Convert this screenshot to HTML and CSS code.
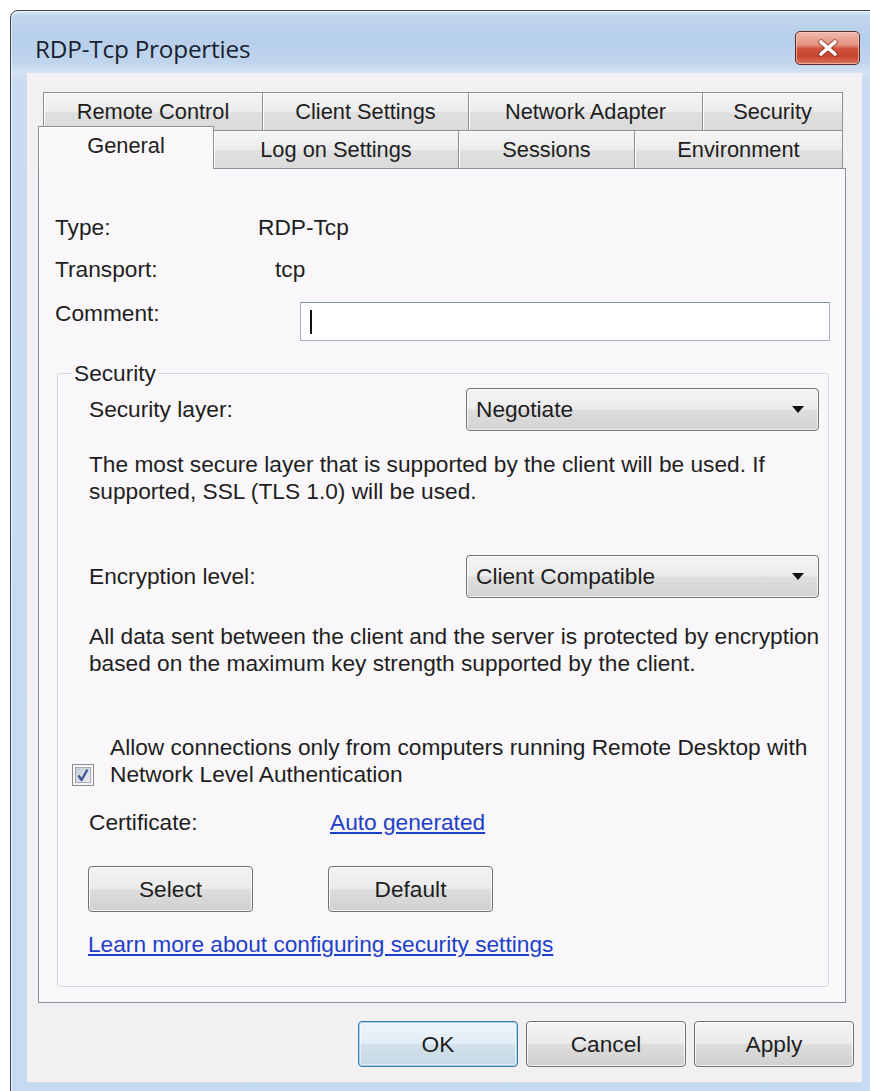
FILE: index.html
```html
<!DOCTYPE html>
<html lang="en">
<head>
<meta charset="utf-8">
<title>RDP-Tcp Properties</title>
<link rel="stylesheet" href="styles.css">
</head>
<body>
<div class="window">
  <div class="titlebar">
    <span class="title">RDP-Tcp Properties</span>
    <button class="close" type="button" aria-label="Close">
      <svg width="24" height="18" viewBox="0 0 24 18">
        <path d="M5 3 L19 15 M19 3 L5 15" stroke="#7a3328" stroke-width="6" stroke-linecap="round" fill="none" opacity="0.55"/>
        <path d="M5 3 L19 15 M19 3 L5 15" stroke="#ffffff" stroke-width="3.6" stroke-linecap="round" fill="none"/>
      </svg>
    </button>
  </div>

  <div class="client">
    <div class="tabs">
      <div class="tab-row tab-row-back">
        <div class="tab tab-remote">Remote Control</div>
        <div class="tab tab-clientset">Client Settings</div>
        <div class="tab tab-network">Network Adapter</div>
        <div class="tab tab-security">Security</div>
      </div>
      <div class="tab-row tab-row-front">
        <div class="tab tab-general is-active">General</div>
        <div class="tab tab-logon">Log on Settings</div>
        <div class="tab tab-sessions">Sessions</div>
        <div class="tab tab-environment">Environment</div>
      </div>
    </div>

    <div class="page">
      <div class="info-row">
        <span class="info-label label-type">Type:</span>
        <span class="info-value">RDP-Tcp</span>
      </div>
      <div class="info-row row-transport">
        <span class="info-label label-transport">Transport:</span>
        <span class="info-value">tcp</span>
      </div>
      <div class="info-row row-comment">
        <span class="info-label label-comment">Comment:</span>
        <div class="textbox"><span class="caret"></span></div>
      </div>

      <fieldset class="group">
        <legend class="group-title">Security</legend>
        <div class="group-body">
          <div class="field-row row-layer">
            <span>Security layer:</span>
            <div class="combo"><span>Negotiate</span><span class="combo-arrow"></span></div>
          </div>
          <p class="note note-layer">The most secure layer that is supported by the client will be used. If<br>supported, SSL (TLS 1.0) will be used.</p>

          <div class="field-row row-encryption">
            <span>Encryption level:</span>
            <div class="combo"><span>Client Compatible</span><span class="combo-arrow"></span></div>
          </div>
          <p class="note note-encryption">All data sent between the client and the server is protected by encryption<br>based on the maximum key strength supported by the client.</p>
        </div>

        <div class="check-row">
          <svg class="checkbox" width="22" height="22" viewBox="0 0 22 22">
            <defs>
              <linearGradient id="cbFill" x1="0" y1="0" x2="1" y2="1">
                <stop offset="0" stop-color="#c3cad4"/>
                <stop offset="1" stop-color="#eef0f3"/>
              </linearGradient>
            </defs>
            <rect x="0.5" y="0.5" width="21" height="21" fill="#f6f6f6" stroke="#8a8c8f"/>
            <rect x="3.5" y="3.5" width="15" height="15" fill="url(#cbFill)" stroke="#a4abb5"/>
            <path d="M6.5 11.5 L9.6 16 L15.5 5.5" fill="none" stroke="#40589a" stroke-width="2.4" stroke-linejoin="round"/>
          </svg>
          <span class="check-label">Allow connections only from computers running Remote Desktop with<br>Network Level Authentication</span>
        </div>

        <div class="group-body">
          <div class="cert-row">
            <span class="cert-label">Certificate:</span>
            <a class="link" href="#">Auto generated</a>
          </div>
          <div class="cert-buttons">
            <button class="btn btn-select" type="button">Select</button>
            <button class="btn btn-default" type="button">Default</button>
          </div>
          <a class="link learn-more" href="#">Learn more about configuring security settings</a>
        </div>
      </fieldset>
    </div>

    <div class="dialog-buttons">
      <button class="btn btn-dialog btn-ok" type="button">OK</button>
      <button class="btn btn-dialog" type="button">Cancel</button>
      <button class="btn btn-dialog" type="button">Apply</button>
    </div>
  </div>
</div>
</body>
</html>
```

FILE: styles.css
```css
html, body {
  margin: 0;
  padding: 0;
  background: #ffffff;
  overflow: hidden;
}

body {
  font-family: "Liberation Sans", Arial, sans-serif;
  font-size: 22.7px;
  line-height: 27px;
  color: #1e1e1e;
}

/* ---------- window frame ---------- */
.window {
  margin: 10px 0 0 10px;
  width: 880px;
  height: 1100px;
  padding-left: 16px;
  border: 1px solid #3b4655;
  border-radius: 8px 8px 0 0;
  background: linear-gradient(180deg,
    #dce8f5 0px, #c1d6ee 5px, #b7cfea 28px, #c0d5ed 52px,
    #d4e3f3 62px, #c8dbf0 72px, #c6daf0 100%);
  box-shadow: inset 1px 1px 0 rgba(255, 255, 255, 0.6);
}

.titlebar {
  display: flex;
  align-items: flex-start;
  width: 835px;
  height: 62px;
}

.title {
  margin: 24px 0 0 8px;
  font-family: "Open Sans", "Noto Sans", sans-serif;
  font-size: 24.3px;
  line-height: 28px;
  color: #18222f;
  letter-spacing: -0.2px;
}

.close {
  margin: 20px 2px 0 auto;
  width: 65px;
  height: 34px;
  padding: 0;
  display: flex;
  align-items: center;
  justify-content: center;
  border: 1px solid #5a2a28;
  border-radius: 5px;
  background: linear-gradient(180deg,
    #f0b9ab 0%, #e49482 40%, #d0533c 52%, #c8442e 75%, #d8755f 100%);
  box-shadow: inset 0 0 0 1px rgba(255, 220, 210, 0.55);
}

/* ---------- client area ---------- */
.client {
  width: 835px;
  box-sizing: border-box;
  height: 1009px;
  padding: 19px 16px 0 11px;
  background: #f3f0f3;
}

.tabs {
  display: flex;
  flex-direction: column;
  font-size: 21.8px;
}

.tab-row {
  display: flex;
  height: 38px;
  align-items: flex-start;
}

.tab-row-back {
  margin-left: 5px;
}

.tab {
  box-sizing: border-box;
  height: 38px;
  margin-right: -1px;
  display: flex;
  align-items: center;
  justify-content: center;
  border: 1px solid #8c8f94;
  border-bottom: 0;
  background: linear-gradient(180deg, #f5f5f5 0%, #ececec 50%, #e0e0e0 51%, #dadada 100%);
  box-shadow: inset 1px 1px 0 #fdfdfd;
  white-space: nowrap;
}

.tab-remote { width: 220px; }
.tab-clientset { width: 207px; }
.tab-network { width: 235px; }
.tab-security { width: 141px; }

.tab-general { width: 176px; }
.tab-logon { width: 246px; }
.tab-sessions { width: 177px; }
.tab-environment { width: 209px; }

.tab.is-active {
  position: relative;
  z-index: 1;
  height: 43px;
  margin-top: -4px;
  padding-bottom: 6px;
  background: #f9f7f9;
  box-shadow: inset 1px 1px 0 #ffffff;
}

/* ---------- tab page ---------- */
.page {
  border: 1px solid #8c8f94;
  background: #f9f7f9;
  padding: 45px 16px 15px 16px;
}

.info-row {
  display: flex;
  align-items: flex-start;
}

.row-transport { margin-top: 15px; }
.row-comment { margin-top: 17px; }

.label-type { width: 203px; }
.label-transport { width: 220px; }
.label-comment { width: 245px; flex: none; }

.textbox {
  flex: 1;
  margin: 2px -1px 0 0;
  height: 39px;
  box-sizing: border-box;
  border: 1px solid #a6b2bf;
  border-top-color: #7f8fa0;
  background: #ffffff;
  display: flex;
  align-items: center;
  padding-left: 9px;
}

.caret {
  width: 1.5px;
  height: 24px;
  background: #111;
}

/* ---------- security group ---------- */
.group {
  margin: 19px 0 0 2px;
  padding: 0 9px 28px 14px;
  border: 1px solid #d2d8de;
  border-radius: 3px;
  box-shadow: inset 1px 1px 0 #ffffff, 1px 1px 0 #ffffff;
  min-inline-size: 0;
}

.group-title {
  padding: 0 2px;
  line-height: 27px;
}

.group-body {
  padding-left: 17px;
}

.field-row {
  display: flex;
  align-items: center;
  justify-content: space-between;
}

.row-layer { margin-top: 1px; }
.row-encryption { margin-top: 50px; }

.combo {
  box-sizing: border-box;
  width: 353px;
  height: 43px;
  display: flex;
  align-items: center;
  justify-content: space-between;
  padding: 0 14px 0 9px;
  border: 1px solid #747474;
  border-radius: 4px;
  background: linear-gradient(180deg, #f4f4f4 0%, #ececec 48%, #dedede 52%, #d2d2d2 100%);
  box-shadow: inset 0 0 0 1px rgba(255, 255, 255, 0.7);
}

.combo-arrow {
  width: 0;
  height: 0;
  border-left: 6px solid transparent;
  border-right: 6px solid transparent;
  border-top: 7px solid #111;
}

.note {
  margin: 0;
  white-space: nowrap;
}

.note-layer { margin-top: 20px; }
.note-encryption { margin-top: 25px; }

.check-row {
  display: flex;
  align-items: flex-start;
  margin-top: 57px;
}

.checkbox {
  flex: none;
  margin-top: 30px;
}

.check-label {
  margin-left: 16px;
  white-space: nowrap;
}

.cert-row {
  display: flex;
  margin-top: 21px;
}

.cert-label { width: 241px; }

.link {
  color: #1d3fc9;
  text-decoration: underline;
  text-underline-offset: 2px;
}

.cert-buttons {
  display: flex;
  gap: 75px;
  margin: 30px 0 0 -1px;
}

.btn {
  box-sizing: border-box;
  height: 46px;
  padding: 0;
  font: inherit;
  color: #1e1e1e;
  border: 1px solid #717171;
  border-radius: 4px;
  background: linear-gradient(180deg, #f3f3f3 0%, #ebebeb 48%, #dddddd 52%, #d0d0d0 100%);
  box-shadow: inset 0 0 0 1px rgba(255, 255, 255, 0.75);
}

.btn-select, .btn-default { width: 165px; }

.learn-more {
  display: inline-block;
  margin: 19px 0 0 -1px;
}

/* ---------- dialog buttons ---------- */
.dialog-buttons {
  display: flex;
  justify-content: flex-end;
  gap: 8px;
  margin: 18px -8px 0 0;
}

.btn-dialog { width: 160px; }

.btn-ok {
  border-color: #3d7bab;
  background: linear-gradient(180deg, #edf5fa 0%, #e2eef5 48%, #d1e1eb 52%, #c5d8e4 100%);
  box-shadow: inset 0 0 0 1px #9fd3f0, inset 0 0 0 2px rgba(255, 255, 255, 0.5);
}
```
